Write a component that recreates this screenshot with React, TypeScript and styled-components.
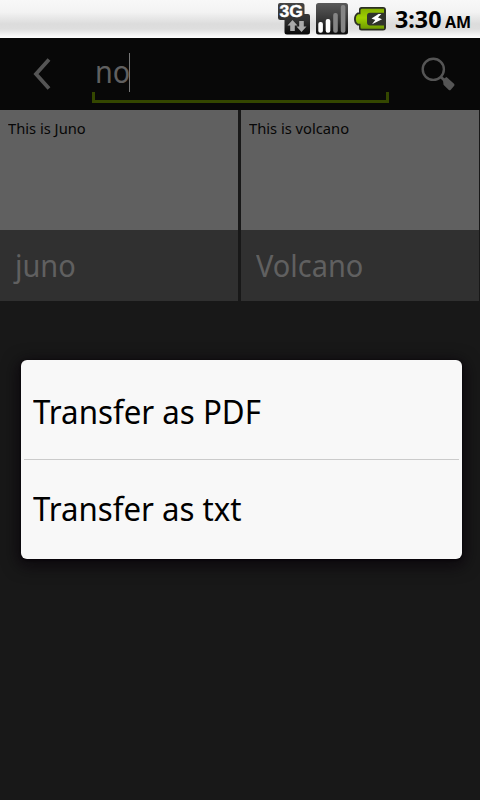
import React from "react";
import styled, { createGlobalStyle } from "styled-components";

const GlobalStyle = createGlobalStyle`
  * { box-sizing: border-box; }
  html, body { margin: 0; padding: 0; background: #181818; }
  body { font-family: "Noto Sans", "Open Sans", sans-serif; }
`;

const Screen = styled.div`
  position: relative;
  width: 480px;
  height: 800px;
  overflow: hidden;
  display: flex;
  flex-direction: column;
  background: #181818;
`;

const StatusBar = styled.header`
  height: 38px;
  flex: none;
  display: flex;
  justify-content: flex-end;
  padding-right: 9px;
  background: linear-gradient(#f8f8f8 0, #f3f3f3 12px, #dcdcdc 24px, #dedede 29px, #f8f8f8 36px, #ffffff 38px);
`;

const StatusIcons = styled.svg`
  width: 116px;
  height: 38px;
  flex: none;
`;

const Clock = styled.div`
  width: 77px;
  display: flex;
  align-items: baseline;
  color: #000;
  font-weight: 700;
  white-space: nowrap;
`;

const Text = styled.span<{ $size: number; $line: number; $squeeze: number }>`
  display: block;
  flex: none;
  white-space: nowrap;
  font-size: ${(p) => p.$size}px;
  line-height: ${(p) => p.$line}px;
  transform: scaleX(${(p) => p.$squeeze});
  transform-origin: left center;
`;

const Time = styled(Text)`
  width: 50px;
  margin-left: 0.5px;
`;

const SearchBar = styled.div`
  height: 72px;
  flex: none;
  display: flex;
  background: #080808;
`;

const BarButton = styled.button`
  width: 91px;
  height: 72px;
  padding: 0;
  border: 0;
  background: none;
  svg { display: block; }
`;

const Field = styled.div`
  width: 297px;
  height: 65px;
  margin: 0 0 0 1px;
  display: flex;
  align-items: flex-start;
  padding: 15px 0 0 3px;
  color: #606060;
  background:
    linear-gradient(#344700, #344700) left bottom / 3px 11px no-repeat,
    linear-gradient(#344700, #344700) right bottom / 3px 11px no-repeat,
    linear-gradient(#344700, #344700) left bottom / 100% 3px no-repeat;
`;

const Query = styled(Text)`
  width: 34px;
`;

const Caret = styled.i`
  width: 1px;
  height: 39px;
  background: #777;
`;

const Grid = styled.main`
  display: grid;
  grid-template-columns: 238px 238px;
  gap: 3px;
`;

const Card = styled.article`
  height: 191px;
  display: flex;
  flex-direction: column;
`;

const Preview = styled.div`
  height: 120px;
  padding: 8px;
  background: #606060;
  color: #070707;
`;

const Caption = styled.div`
  height: 71px;
  padding: 16px 15px;
  background: #303030;
  color: #606060;
`;

const Overlay = styled.div`
  position: absolute;
  inset: 0;
  padding: 360px 18px 0 21px;
`;

const Dialog = styled.div`
  height: 199px;
  padding: 0 3px;
  border-radius: 6px;
  background: #f8f8f8;
  color: #000;
  box-shadow: 0 4px 16px 3px rgba(8, 3, 10, 0.75), 0 1px 3px #050306;
`;

const MenuItem = styled.div`
  height: 99px;
  padding: 29px 9px 0;
  & + & {
    height: 100px;
    padding-top: 26px;
    border-top: 1px solid #cbcbcb;
  }
`;

function NetworkIcons() {
  return (
    <StatusIcons viewBox="278 0 116 38">
      <defs>
        <linearGradient id="tile" x1="0" y1="0" x2="0" y2="1">
          <stop offset="0" stopColor="#444" />
          <stop offset="0.55" stopColor="#303030" />
          <stop offset="1" stopColor="#080808" />
        </linearGradient>
        <linearGradient id="signal" x1="0" y1="0" x2="0" y2="1">
          <stop offset="0" stopColor="#5a5a5a" />
          <stop offset="0.5" stopColor="#383838" />
          <stop offset="1" stopColor="#0c0c0c" />
        </linearGradient>
        <linearGradient id="cell" x1="0" y1="0" x2="0" y2="1">
          <stop offset="0" stopColor="#83b000" />
          <stop offset="0.45" stopColor="#9fd000" />
          <stop offset="1" stopColor="#6f9c00" />
        </linearGradient>
      </defs>

      <path d="M280 3h22q2.500 0 2.500 2.500V14h3.500q2 0 2 2v16q0 2.500-2.500 2.500H287q-2.500 0-2.500-2.500V20h-4q-2.500 0-2.500-2V5q0-2 2-2z" fill="url(#tile)" />
      <text x="279.500" y="17.200" fontFamily="Liberation Sans" fontWeight="700" fontSize="16.500" textLength="23.500" lengthAdjust="spacingAndGlyphs" fill="#fff" stroke="#fff" strokeWidth="0.400">3G</text>
      <path d="M292.500 20l5 5.500h-2.700V31h-4.600v-5.500h-2.700z" fill="#aaa" />
      <path d="M301.500 32l5-5.500h-2.700V21h-4.600v5.500h-2.700z" fill="#aaa" />

      <rect x="316" y="3" width="32" height="31.500" rx="2.500" fill="url(#signal)" />
      <rect x="318.300" y="22" width="4.600" height="10.700" rx="2" fill="#fff" />
      <rect x="325.700" y="19" width="4.600" height="13.700" rx="2" fill="#fff" />
      <rect x="333.200" y="13" width="4.600" height="19.700" rx="2" fill="#858585" />
      <rect x="340.800" y="5" width="4.600" height="27.700" rx="2" fill="#858585" />

      <path d="M361.500 7H383q3 0 3 3v17.500q0 3-3 3h-21.500q-2.500 0-2.500-2.500V25.500h-1.500q-3.500-2-3.500-6.500t3.500-6.500h1.500V9.500q0-2.500 2.500-2.500z" fill="#2b2f22" />
      <path d="M362 8.800h22v20H362q-1.500 0-1.500-1.500V23.800h-2.500q-2.200-1.300-2.200-4.800t2.200-4.800h2.500v-3.900q0-1.500 1.500-1.500z" fill="url(#cell)" />
      <path d="M370 12.800h16v12.600h-16q-3 0-3-3v-6.600q0-3 3-3z" fill="#30332b" />
      <path d="M378.500 14l-7 4.500 3.800 1.500-3.300 4.200 10-5-4-1.700 3.300-3.500z" fill="#fff" />
    </StatusIcons>
  );
}

const notes = [
  { body: "This is Juno", title: "juno" },
  { body: "This is volcano", title: "Volcano" },
];

export default function App() {
  return (
    <>
      <GlobalStyle />
      <Screen>
        <StatusBar>
          <NetworkIcons />
          <Clock>
            <Time $size={24} $line={38} $squeeze={0.97}>3:30</Time>
            <Text $size={16.5} $line={38} $squeeze={0.97}>AM</Text>
          </Clock>
        </StatusBar>

        <SearchBar>
          <BarButton aria-label="Back">
            <svg width="91" height="72" viewBox="0 38 91 72" fill="none">
              <path d="M49 59.500L36 74l13 14.500" stroke="#555" strokeWidth="3.800" />
            </svg>
          </BarButton>
          <Field>
            <Query $size={30} $line={38} $squeeze={0.96}>no</Query>
            <Caret />
          </Field>
          <BarButton aria-label="Search">
            <svg width="91" height="72" viewBox="389 38 91 72" fill="none">
              <circle cx="433.300" cy="69.300" r="10.600" stroke="#555" strokeWidth="2.400" />
              <path d="M440.500 76.500l4 4" stroke="#555" strokeWidth="2.600" />
              <path d="M443 80.500q.5-2.500 3.500-3.500l7.500 6.800q1 1 .2 2l-3.400 4q-1 1-2 .2l-5.300-5.300z" fill="#555" />
            </svg>
          </BarButton>
        </SearchBar>

        <Grid>
          {notes.map((note) => (
            <Card key={note.title}>
              <Preview>
                <Text $size={14.5} $line={20} $squeeze={1.015}>{note.body}</Text>
              </Preview>
              <Caption>
                <Text $size={30} $line={40} $squeeze={0.965}>{note.title}</Text>
              </Caption>
            </Card>
          ))}
        </Grid>

        <Overlay>
          <Dialog role="dialog">
            <MenuItem>
              <Text $size={33} $line={46} $squeeze={0.947}>Transfer as PDF</Text>
            </MenuItem>
            <MenuItem>
              <Text $size={33} $line={46} $squeeze={0.945}>Transfer as txt</Text>
            </MenuItem>
          </Dialog>
        </Overlay>
      </Screen>
    </>
  );
}
